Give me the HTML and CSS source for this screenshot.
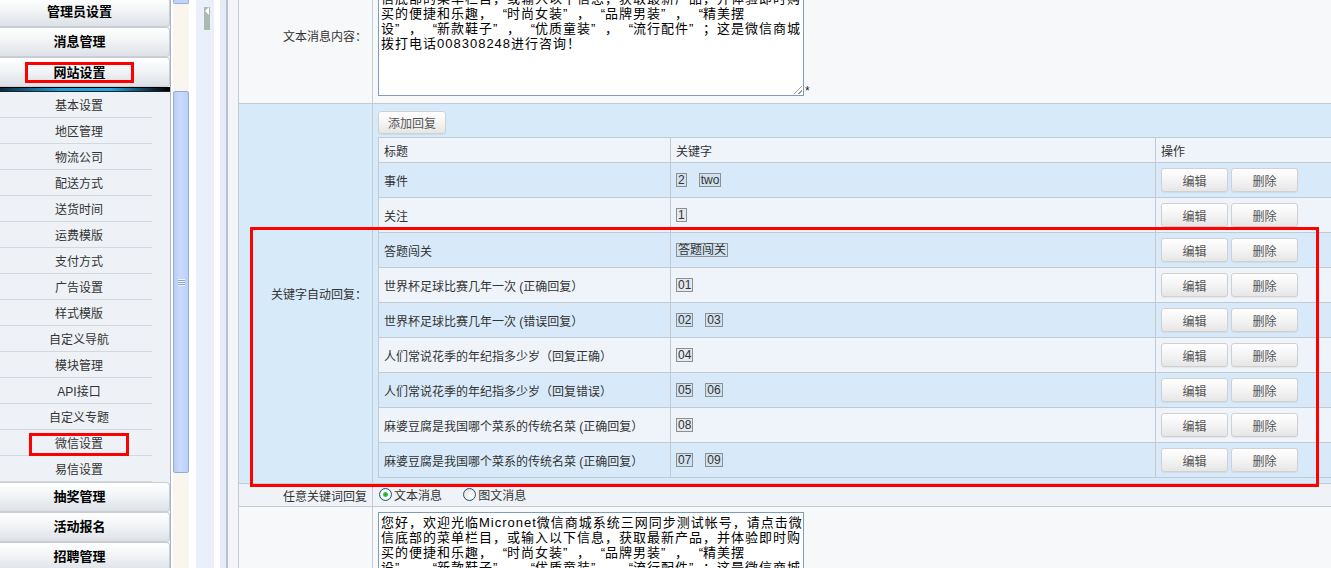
FILE: index.html
```html
<!DOCTYPE html>
<html lang="zh-CN">
<head>
    <meta charset="UTF-8">
    <title>网站设置 - 微信设置</title>
    <link rel="stylesheet" href="styles.css">
</head>
<body>
<div class="frame">
    <!-- left menu -->
    <div class="sidebar">
        <div class="menu">
            <div class="menu-head">管理员设置</div>
            <div class="menu-head">消息管理</div>
            <div class="menu-head"><span class="mark mark-head">网站设置</span></div>
            <div class="menu-bar"></div>
            <ul class="submenu">
                <li>基本设置</li>
                <li>地区管理</li>
                <li>物流公司</li>
                <li>配送方式</li>
                <li>送货时间</li>
                <li>运费模版</li>
                <li>支付方式</li>
                <li>广告设置</li>
                <li>样式模版</li>
                <li>自定义导航</li>
                <li>模块管理</li>
                <li>API接口</li>
                <li>自定义专题</li>
                <li><span class="mark mark-item">微信设置</span></li>
                <li>易信设置</li>
            </ul>
            <div class="menu-head">抽奖管理</div>
            <div class="menu-head">活动报名</div>
            <div class="menu-head">招聘管理</div>
        </div>
    </div>
    <div class="vscroll">
        <div class="vscroll-btn"></div>
        <div class="vscroll-thumb"><span class="grip"></span></div>
    </div>
    <div class="splitter"><div class="toggle"></div></div>

    <!-- main form -->
    <div class="main">
        <div class="main-inner">
            <div class="form-wrap">
                <table class="form-table">
                    <colgroup><col class="col-label"><col></colgroup>
                    <tr class="row-text">
                        <th>文本消息内容：</th>
                        <td>
                            <div class="field">
                                <div class="textbox">
                                    您好，欢迎光临Micronet微信商城系统三网同步测试帐号，请点击微<br>
                                    信底部的菜单栏目，或输入以下信息，获取最新产品，并体验即时购<br>
                                    买的便捷和乐趣，<span class="ql">“</span>时尚女装<span class="qr">”</span>，<span class="ql">“</span>品牌男装<span class="qr">”</span>，<span class="ql">“</span>精美摆<br>
                                    设<span class="qr">”</span>，<span class="ql">“</span>新款鞋子<span class="qr">”</span>，<span class="ql">“</span>优质童装<span class="qr">”</span>，<span class="ql">“</span>流行配件<span class="qr">”</span>；这是微信商城<br>
                                    拨打电话008308248进行咨询！
                                </div>
                                <span class="req">*</span>
                            </div>
                        </td>
                    </tr>
                    <tr class="row-keys">
                        <th>关键字自动回复：</th>
                        <td>
                            <button class="btn btn-add">添加回复</button>
                            <table class="reply-table">
                                <colgroup><col class="c-title"><col class="c-key"><col class="c-ops"></colgroup>
                                <tr class="head"><th>标题</th><th>关键字</th><th>操作</th></tr>
                                <tr>
                                    <td>事件</td>
                                    <td><span class="tag">2</span><span class="tag">two</span></td>
                                    <td><div class="ops"><button class="btn">编辑</button><button class="btn">删除</button></div></td>
                                </tr>
                                <tr>
                                    <td>关注</td>
                                    <td><span class="tag">1</span></td>
                                    <td><div class="ops"><button class="btn">编辑</button><button class="btn">删除</button></div></td>
                                </tr>
                                <tr>
                                    <td>答题闯关</td>
                                    <td><span class="tag">答题闯关</span></td>
                                    <td><div class="ops"><button class="btn">编辑</button><button class="btn">删除</button></div></td>
                                </tr>
                                <tr>
                                    <td>世界杯足球比赛几年一次 (正确回复）</td>
                                    <td><span class="tag">01</span></td>
                                    <td><div class="ops"><button class="btn">编辑</button><button class="btn">删除</button></div></td>
                                </tr>
                                <tr>
                                    <td>世界杯足球比赛几年一次 (错误回复）</td>
                                    <td><span class="tag">02</span><span class="tag">03</span></td>
                                    <td><div class="ops"><button class="btn">编辑</button><button class="btn">删除</button></div></td>
                                </tr>
                                <tr>
                                    <td>人们常说花季的年纪指多少岁（回复正确）</td>
                                    <td><span class="tag">04</span></td>
                                    <td><div class="ops"><button class="btn">编辑</button><button class="btn">删除</button></div></td>
                                </tr>
                                <tr>
                                    <td>人们常说花季的年纪指多少岁（回复错误）</td>
                                    <td><span class="tag">05</span><span class="tag">06</span></td>
                                    <td><div class="ops"><button class="btn">编辑</button><button class="btn">删除</button></div></td>
                                </tr>
                                <tr>
                                    <td>麻婆豆腐是我国哪个菜系的传统名菜 (正确回复）</td>
                                    <td><span class="tag">08</span></td>
                                    <td><div class="ops"><button class="btn">编辑</button><button class="btn">删除</button></div></td>
                                </tr>
                                <tr>
                                    <td>麻婆豆腐是我国哪个菜系的传统名菜 (正确回复）</td>
                                    <td><span class="tag">07</span><span class="tag">09</span></td>
                                    <td><div class="ops"><button class="btn">编辑</button><button class="btn">删除</button></div></td>
                                </tr>
                            </table>
                        </td>
                    </tr>
                    <tr class="row-any">
                        <th>任意关键词回复</th>
                        <td>
                            <label class="radio checked">文本消息</label>
                            <label class="radio">图文消息</label>
                        </td>
                    </tr>
                    <tr class="row-text row-last">
                        <th></th>
                        <td>
                            <div class="field">
                                <div class="textbox">
                                    您好，欢迎光临Micronet微信商城系统三网同步测试帐号，请点击微<br>
                                    信底部的菜单栏目，或输入以下信息，获取最新产品，并体验即时购<br>
                                    买的便捷和乐趣，<span class="ql">“</span>时尚女装<span class="qr">”</span>，<span class="ql">“</span>品牌男装<span class="qr">”</span>，<span class="ql">“</span>精美摆<br>
                                    设<span class="qr">”</span>，<span class="ql">“</span>新款鞋子<span class="qr">”</span>，<span class="ql">“</span>优质童装<span class="qr">”</span>，<span class="ql">“</span>流行配件<span class="qr">”</span>；这是微信商城<br>
                                    拨打电话008308248进行咨询！
                                </div>
                            </div>
                        </td>
                    </tr>
                </table>
                <div class="highlight"></div>
            </div>
        </div>
    </div>
</div>
</body>
</html>
```

FILE: styles.css
```css
body {
    margin: 0;
    font-family: "Liberation Sans", "Noto Sans CJK SC", sans-serif;
    font-size: 12px;
    color: #333;
    background: #fff;
    overflow: hidden;
}
.frame {
    display: flex;
    height: 568px;
    overflow: hidden;
}

/* sidebar menu */
.sidebar {
    width: 170px;
    flex: none;
    background: #eef1f5;
    border-right: 1px solid #a9b4c2;
    overflow: hidden;
}
.menu {
    margin-top: -3px;
}
.menu-head {
    height: 28px;
    line-height: 28px;
    padding-right: 10px;
    text-align: center;
    font-size: 13px;
    font-weight: bold;
    color: #000;
    background: linear-gradient(#ffffff, #f2f4f6 45%, #dde1e6);
    border: 1px solid #c9ced5;
    border-left: none;
    border-radius: 0 4px 4px 0;
}
.mark {
    display: inline-block;
    border: 3px solid #f00;
    vertical-align: middle;
}
.mark-head {
    line-height: 15px;
    padding: 0 25px;
}
.mark-item {
    line-height: 17px;
    padding: 0 23px;
}
.menu-bar {
    height: 3px;
    border-top: 1px solid #000;
    border-bottom: 1px solid #222;
    background: linear-gradient(to right, #0b2a40, #1d9ed8 35%, #22a8e2 65%, #0a2030 92%, #000);
}
.submenu {
    list-style: none;
    margin: 0;
    padding: 0;
}
.submenu li {
    width: 146px;
    height: 23px;
    padding: 2px 0 0 6px;
    line-height: 25px;
    text-align: center;
    color: #333;
    border-bottom: 1px solid #d3d8de;
}

/* fake scrollbar of the menu frame */
.vscroll {
    width: 16px;
    flex: none;
    margin: 0 7px 0 2px;
    background: #f8f6ef;
}
.vscroll-btn {
    height: 3px;
    background: #c3d3f7;
    border: 1px solid #9ab0dc;
    border-top: none;
    border-radius: 0 0 2px 2px;
}
.vscroll-thumb {
    margin-top: 87px;
    height: 380px;
    border: 1px solid #94acd9;
    border-radius: 2px;
    background: linear-gradient(to right, #b8ccf6, #cadafd 45%, #bed0f8);
    display: flex;
    align-items: center;
    justify-content: center;
}
.grip {
    width: 7px;
    height: 7px;
    background: repeating-linear-gradient(#eef3ff 0 1px, #8aa4d6 1px 2px);
}
.splitter {
    width: 18px;
    flex: none;
    margin-right: 6px;
    background: #ebeff9;
}
.toggle {
    width: 6px;
    height: 23px;
    margin-left: 8px;
    background: #a9bab0;
}
.toggle::before {
    content: "";
    display: block;
    width: 0;
    height: 0;
    margin: 7px 0 0 1px;
    border-top: 4px solid transparent;
    border-bottom: 4px solid transparent;
    border-right: 4px solid #fff;
}

/* main frame */
.main {
    flex: none;
    padding-left: 6px;
    background: #e5ecf7;
}
.main-inner {
    display: flow-root;
    height: 100%;
    padding-left: 10px;
    background: #f3f5f9;
    border-left: 2px solid #b8c0cc;
}
.form-wrap {
    position: relative;
    width: 1120px;
    margin-top: -34px;
}
.form-table {
    width: 1120px;
    border-collapse: collapse;
    table-layout: fixed;
    border-left: 1px solid #c4cbd3;
}
.col-label {
    width: 134px;
}
.form-table > tbody > tr {
    border-top: 1px solid #c4cbd3;
}
.form-table > tbody > tr > th {
    padding: 0 5px 0 0;
    text-align: right;
    font-weight: normal;
    color: #333;
    border-right: 1px solid #c4cbd3;
}
.form-table > tbody > tr > td {
    padding: 6px 5px 7px;
}
.row-text {
    background: #f7f8fa;
}
.row-last > td {
    vertical-align: top;
}
.form-table > tbody > tr.row-last > td {
    padding-top: 5px;
}
.row-keys {
    background: #d7eaf9;
}
.form-table > tbody > tr.row-keys > td {
    padding: 7px 5px 5px;
}
.row-any {
    background: #eff3f8;
}
.form-table > tbody > tr.row-any > td {
    height: 22px;
    padding: 0 6px;
}
.field {
    display: flex;
    align-items: flex-end;
}
.textbox {
    position: relative;
    width: 426px;
    height: 123px;
    box-sizing: border-box;
    padding: 2px 0 2px 2px;
    border: 1px solid #7f9db9;
    background: #fff;
    color: #000;
    font-size: 13px;
    line-height: 15px;
    letter-spacing: 1px;
    white-space: nowrap;
    overflow: hidden;
}
/* full-width quotes, as the old CJK font drew them */
.ql,
.qr {
    display: inline-block;
    width: 14px;
    letter-spacing: 0;
}
.ql {
    text-align: right;
}
.qr {
    text-align: left;
}
/* resize grip */
.textbox::after {
    content: "";
    position: absolute;
    right: 1px;
    bottom: 1px;
    width: 9px;
    height: 9px;
    background: linear-gradient(135deg, transparent 0 52%, #9a9a9a 52% 60%, transparent 60% 76%, #9a9a9a 76% 84%, transparent 84%);
}
.req {
    line-height: 10px;
    margin-left: 1px;
    color: #222;
}

/* buttons */
.btn {
    padding: 0;
    font-family: inherit;
    font-size: 12px;
    color: #555;
    background: linear-gradient(#ffffff, #f4f4f4 50%, #e6e6e6);
    border: 1px solid #d0d0d0;
    border-radius: 3px;
    box-shadow: 0 1px 1px rgba(0,0,0,0.06);
    cursor: pointer;
}
.btn-add {
    display: block;
    width: 68px;
    height: 23px;
    margin-bottom: 3px;
}

/* reply list */
.reply-table {
    width: 967px;
    border-collapse: collapse;
    table-layout: fixed;
}
.c-title { width: 292px; }
.c-key { width: 485px; }
.c-ops { width: 190px; }
.reply-table th,
.reply-table td {
    padding: 0 0 0 5px;
    text-align: left;
    font-weight: normal;
    color: #333;
    border: 1px solid #c3cad2;
    white-space: nowrap;
}
.reply-table tr {
    height: 35px;
    background: #d8eaf9;
}
.reply-table tr:nth-child(odd) {
    background: #eef4fa;
}
.reply-table tr.head {
    height: 25px;
}
.tag {
    display: inline-block;
    margin-right: 12px;
    padding: 0 1px;
    line-height: 12px;
    border: 1px solid #8f8f8f;
    background: rgba(120,130,140,0.08);
    color: #333;
}
.ops {
    display: flex;
    gap: 3px;
}
.ops .btn {
    width: 67px;
    height: 24px;
}

/* radios */
.radio {
    display: inline-flex;
    align-items: center;
    margin-right: 18px;
    color: #333;
}
.radio::before {
    content: "";
    width: 11px;
    height: 11px;
    margin-right: 2px;
    border: 1px solid #1c5180;
    border-radius: 50%;
    background: radial-gradient(circle at 60% 60%, #ffffff, #dcdcd6);
}
.radio.checked::before {
    background: radial-gradient(circle, #1f9e1f 0, #43c443 2px, #ffffff 3px, #e4e4de);
}

/* red annotation box */
.highlight {
    position: absolute;
    left: 12px;
    top: 261px;
    width: 1063px;
    height: 254px;
    border: 3px solid #f00;
}
```
